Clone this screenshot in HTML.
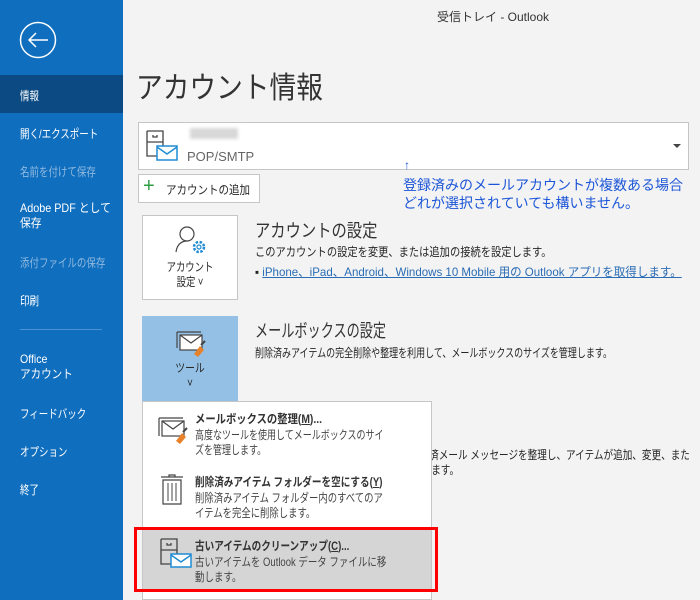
<!DOCTYPE html>
<html><head><meta charset="utf-8"><style>
*{margin:0;padding:0;box-sizing:border-box}
body{width:700px;height:600px;overflow:hidden;background:#f3f3f3;font-family:"Liberation Sans","Noto Sans CJK JP",sans-serif;position:relative;color:#262626}
.a{position:absolute;white-space:nowrap;transform-origin:0 0}
#side{position:absolute;left:0;top:0;width:123px;height:600px;background:#106ebe;color:#fff;overflow:hidden}
#side .a{font-size:12px;left:20px;transform:scaleX(0.79)}
.dis{color:#8fb9e0}
</style></head><body>
<div id="side">
<svg class="a" style="left:19px;top:21px;transform:none" width="38" height="38" viewBox="0 0 38 38"><circle cx="19" cy="19" r="17.5" fill="none" stroke="#fff" stroke-width="1.5"/><path d="M10 19H29M17 12L10 19L17 26" fill="none" stroke="#fff" stroke-width="1.5"/></svg>
<div class="a" style="left:0;top:75px;width:123px;height:38px;background:#0b4a82;transform:none"></div>
<div class="a" style="top:87px">情報</div>
<div class="a" style="top:125px">開く/エクスポート</div>
<div class="a dis" style="top:163px">名前を付けて保存</div>
<div class="a" style="top:201px;line-height:15px;transform:scaleX(0.9)">Adobe PDF として<br>保存</div>
<div class="a dis" style="top:254px">添付ファイルの保存</div>
<div class="a" style="top:292px">印刷</div>
<div class="a" style="left:20px;top:329px;width:82px;height:1px;background:#4b93d3;transform:none"></div>
<div class="a" style="top:352px;line-height:15px;transform:scaleX(0.88)">Office<br>アカウント</div>
<div class="a" style="top:405px">フィードバック</div>
<div class="a" style="top:443px">オプション</div>
<div class="a" style="top:481px">終了</div>
</div>
<div class="a" style="left:437px;top:8px;font-size:12px;color:#333">受信トレイ - Outlook</div>
<div class="a" style="left:136px;top:63px;font-size:30px;color:#333;transform:scaleX(0.89)">アカウント情報</div>
<div class="a" style="left:138px;top:122px;width:551px;height:48px;background:#fff;border:1px solid #c6c6c6"></div>
<svg class="a" style="left:145px;top:130px" width="34" height="32" viewBox="0 0 34 32"><path d="M2 1H18V16M2 1V26H12M2 12H18M8 5V7H12V5" fill="none" stroke="#444" stroke-width="1.3"/><rect x="12" y="16" width="20" height="14" fill="#fff" stroke="#1e8bd3" stroke-width="1.5"/><path d="M12 17L22 24L32 17" fill="none" stroke="#1e8bd3" stroke-width="1.5"/></svg>
<div class="a" style="left:190px;top:128px;width:48px;height:11px;background:#d8d8d8;filter:blur(1.5px)"></div>
<div class="a" style="left:187px;top:149px;font-size:13px;color:#666">POP/SMTP</div>
<div class="a" style="left:673px;top:144px;width:0;height:0;border:4px solid transparent;border-top:4px solid #444"></div>
<div class="a" style="left:138px;top:174px;width:122px;height:29px;background:#fff;border:1px solid #c6c6c6"></div>
<div class="a" style="left:143px;top:175px;font-size:20px;color:#2e9e45;font-weight:300">+</div>
<div class="a" style="left:166px;top:181px;font-size:12px;transform:scaleX(0.875)">アカウントの追加</div>
<div class="a" style="left:404px;top:158px;font-size:12px;color:#1c56d8">↑</div>
<div class="a" style="left:403px;top:176px;font-size:14px;color:#1c56d8;line-height:18px">登録済みのメールアカウントが複数ある場合<br>どれが選択されていても構いません。</div>
<div class="a" style="left:142px;top:215px;width:96px;height:85px;background:#fff;border:1px solid #c6c6c6"></div>
<svg class="a" style="left:175px;top:224px" width="34" height="34" viewBox="0 0 34 34"><circle cx="12" cy="10" r="7" fill="none" stroke="#444" stroke-width="1.2"/><path d="M1 28C2 20 7 17 12 17" fill="none" stroke="#444" stroke-width="1.2"/><circle cx="24" cy="23" r="5" fill="none" stroke="#1e8bd3" stroke-width="2.5" stroke-dasharray="2.5 1.5"/><circle cx="24" cy="23" r="2" fill="none" stroke="#1e8bd3" stroke-width="1.2"/></svg>
<div class="a" style="left:142px;top:260px;width:96px;text-align:center;font-size:12px;line-height:15px;transform:scaleX(0.78);transform-origin:50% 0">アカウント<br>設定 ˅</div>
<div class="a" style="left:255px;top:217px;font-size:18px;color:#333;transform:scaleX(0.85)">アカウントの設定</div>
<div class="a" style="left:255px;top:243px;font-size:12px;transform:scaleX(0.855)">このアカウントの設定を変更、または追加の接続を設定します。</div>
<div class="a" style="left:255px;top:263px;font-size:12px;transform:scaleX(0.96)">▪ <span style="color:#2a6cb5;text-decoration:underline">iPhone、iPad、Android、Windows 10 Mobile 用の Outlook アプリを取得します。</span></div>
<div class="a" style="left:142px;top:316px;width:96px;height:86px;background:#93c0e4"></div>
<svg class="a" style="left:176px;top:330px" width="32" height="28" viewBox="0 0 32 28"><path d="M1 2H25M1 2V18" stroke="#444" stroke-width="1.2" fill="none"/><rect x="4" y="5" width="22" height="15" fill="#fff" stroke="#444" stroke-width="1.2"/><path d="M4 5L15 13L26 5" fill="none" stroke="#444" stroke-width="1.2"/><path d="M18 24L24 16L28 20L22 27Z" fill="#e8822a"/><path d="M25 15L29 11" stroke="#444" stroke-width="2"/></svg>
<div class="a" style="left:142px;top:361px;width:96px;text-align:center;font-size:12px;line-height:15px;transform:scaleX(0.82);transform-origin:50% 0">ツール<br>˅</div>
<div class="a" style="left:255px;top:317px;font-size:18px;color:#333;transform:scaleX(0.73)">メールボックスの設定</div>
<div class="a" style="left:255px;top:344px;font-size:12px;transform:scaleX(0.75)">削除済みアイテムの完全削除や整理を利用して、メールボックスのサイズを管理します。</div>
<div class="a" style="right:10px;top:446px;font-size:12px;transform:scaleX(0.8);transform-origin:100% 0">除済メール メッセージを整理し、アイテムが追加、変更、また</div>
<div class="a" style="left:412px;top:461px;font-size:12px;transform:scaleX(0.8)">あります。</div>
<div class="a" style="left:142px;top:401px;width:290px;height:199px;background:#fff;border:1px solid #c6c6c6"></div>
<svg class="a" style="left:158px;top:416px" width="34" height="30" viewBox="0 0 34 30"><path d="M1 2H25M1 2V20" stroke="#444" stroke-width="1.2" fill="none"/><rect x="4" y="5" width="22" height="15" fill="#fff" stroke="#444" stroke-width="1.2"/><path d="M4 5L15 13L26 5" fill="none" stroke="#444" stroke-width="1.2"/><path d="M18 25L24 17L28 21L22 28Z" fill="#e8822a"/><path d="M25 16L29 12" stroke="#444" stroke-width="2"/></svg>
<div class="a" style="left:195px;top:410px;font-size:12px;font-weight:bold;color:#333;transform:scaleX(0.86)">メールボックスの整理(<u>M</u>)...</div>
<div class="a" style="left:195px;top:428px;font-size:12px;color:#444;line-height:15px;transform:scaleX(0.75)">高度なツールを使用してメールボックスのサイ<br>ズを管理します。</div>
<svg class="a" style="left:160px;top:474px" width="24" height="32" viewBox="0 0 24 32"><path d="M1 3H23M9 3V1H15V3M3 6H21V30H3Z" fill="none" stroke="#444" stroke-width="1.2"/><path d="M8 9V27M12 9V27M16 9V27" stroke="#444" stroke-width="1"/></svg>
<div class="a" style="left:195px;top:473px;font-size:12px;font-weight:bold;color:#333;transform:scaleX(0.8)">削除済みアイテム フォルダーを空にする(<u>Y</u>)</div>
<div class="a" style="left:195px;top:491px;font-size:12px;color:#444;line-height:15px;transform:scaleX(0.78)">削除済みアイテム フォルダー内のすべてのア<br>イテムを完全に削除します。</div>
<div class="a" style="left:143px;top:529px;width:288px;height:61px;background:#d5d5d5"></div>
<div class="a" style="left:134px;top:527px;width:304px;height:65px;border:3px solid #f00"></div>
<svg class="a" style="left:159px;top:538px" width="34" height="32" viewBox="0 0 34 32"><path d="M2 1H18V16M2 1V26H12M2 12H18M8 5V7H12V5" fill="none" stroke="#444" stroke-width="1.3"/><rect x="12" y="16" width="20" height="13" fill="#fff" stroke="#1e8bd3" stroke-width="1.5"/><path d="M12 17L22 24L32 17" fill="none" stroke="#1e8bd3" stroke-width="1.5"/></svg>
<div class="a" style="left:195px;top:537px;font-size:12px;font-weight:bold;color:#333;transform:scaleX(0.8)">古いアイテムのクリーンアップ(<u>C</u>)...</div>
<div class="a" style="left:195px;top:555px;font-size:12px;color:#444;line-height:15px;transform:scaleX(0.79)">古いアイテムを Outlook データ ファイルに移<br>動します。</div>
</body></html>
